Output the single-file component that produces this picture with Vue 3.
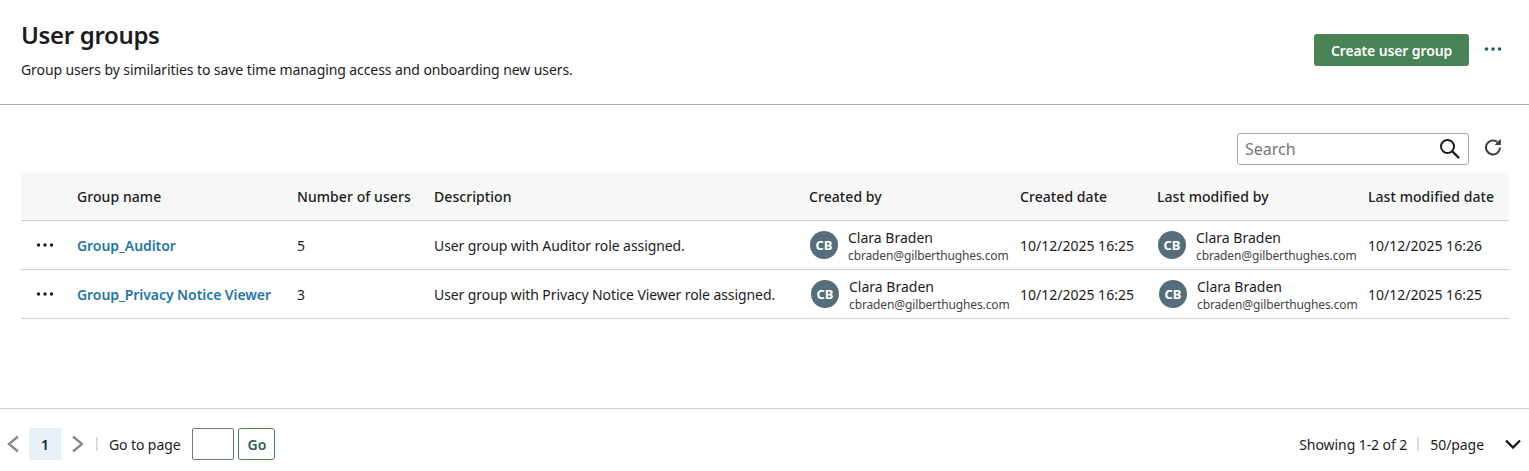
<template>
  <div class="page">
    <header class="top">
      <div>
        <h1>User groups</h1>
        <p>Group users by similarities to save time managing access and onboarding new users.</p>
      </div>
      <div class="top-actions">
        <button class="create" type="button">Create user group</button>
        <svg class="more-teal" width="18" height="6" viewBox="0 0 18 6">
          <circle cx="2.500" cy="3" r="1.800" />
          <circle cx="9" cy="3" r="1.800" />
          <circle cx="15.500" cy="3" r="1.800" />
        </svg>
      </div>
    </header>

    <div class="toolbar">
      <div class="search">
        <span>Search</span>
        <svg width="22" height="22" viewBox="0 0 22 22" fill="none" stroke="#1a1a1a" stroke-width="2">
          <circle cx="8.500" cy="8.500" r="6.500" />
          <path d="M13.300 13.300 20 20" stroke-width="2.400" />
        </svg>
      </div>
      <svg class="refresh" width="18" height="18" viewBox="0 0 18 18" fill="none" stroke="#3c3c3c" stroke-width="2">
        <path d="M16 9.500A7 7 0 1 1 13.300 3.900" />
        <path d="M16.800 0.800V7H10.600Z" fill="#3c3c3c" stroke="none" />
      </svg>
    </div>

    <div class="table">
      <div class="row head">
        <div></div>
        <div v-for="h in headers" :key="h">{{ h }}</div>
      </div>
      <div class="row" v-for="(g, i) in groups" :key="g.name">
        <svg class="more" width="18" height="4" viewBox="0 0 18 4">
          <circle cx="2.500" cy="2" r="1.700" />
          <circle cx="9" cy="2" r="1.700" />
          <circle cx="15.500" cy="2" r="1.700" />
        </svg>
        <a class="link">{{ g.name }}</a>
        <div>{{ g.users }}</div>
        <div class="desc">{{ g.description }}</div>
        <div class="person" :class="{ shifted: i === 1 }">
          <span class="avatar">CB</span>
          <div class="person-text">
            <div class="person-name">Clara Braden</div>
            <div class="person-mail">cbraden@gilberthughes.com</div>
          </div>
        </div>
        <div>{{ g.created }}</div>
        <div class="person" :class="{ shifted: i === 1 }">
          <span class="avatar">CB</span>
          <div class="person-text">
            <div class="person-name">Clara Braden</div>
            <div class="person-mail">cbraden@gilberthughes.com</div>
          </div>
        </div>
        <div>{{ g.modified }}</div>
      </div>
    </div>

    <footer class="pager">
      <div class="pager-left">
        <svg width="14" height="18" viewBox="0 0 14 18" fill="none" stroke="#8a8a8a" stroke-width="2.400">
          <path d="M11 1.500 2 9l9 7.500" />
        </svg>
        <span class="current">1</span>
        <svg width="14" height="18" viewBox="0 0 14 18" fill="none" stroke="#8a8a8a" stroke-width="2.400">
          <path d="M4 1.500 13 9l-9 7.500" />
        </svg>
        <span class="bar"></span>
        <span class="goto">Go to page</span>
        <span class="page-input"></span>
        <button class="go" type="button">Go</button>
      </div>
      <div class="pager-right">
        <span>Showing 1-2 of 2</span>
        <span class="bar"></span>
        <span>50/page</span>
        <svg class="chev" width="16" height="10" viewBox="0 0 16 10" fill="none" stroke="#1a1a1a" stroke-width="2.400">
          <path d="M1 1.500 8 8.500l7-7" />
        </svg>
      </div>
    </footer>
  </div>
</template>

<script setup>
const headers = [
  "Group name",
  "Number of users",
  "Description",
  "Created by",
  "Created date",
  "Last modified by",
  "Last modified date",
];

const groups = [
  {
    name: "Group_Auditor",
    users: 5,
    description: "User group with Auditor role assigned.",
    created: "10/12/2025 16:25",
    modified: "10/12/2025 16:26",
  },
  {
    name: "Group_Privacy Notice Viewer",
    users: 3,
    description: "User group with Privacy Notice Viewer role assigned.",
    created: "10/12/2025 16:25",
    modified: "10/12/2025 16:25",
  },
];
</script>

<style>
body {
  background: #fff;
}
</style>

<style scoped>
.page {
  height: 471px;
  overflow: hidden;
  font-family: "Noto Sans", "Open Sans", sans-serif;
  font-size: 14px;
  color: #1c1c1c;
}

.top {
  height: 105px;
  box-sizing: border-box;
  border-bottom: 1px solid #a9a9a9;
  padding: 19px 27px 0 21px;
  display: flex;
  justify-content: space-between;
}

h1 {
  margin: 0;
  font-size: 24px;
  line-height: 31px;
  font-weight: 600;
  letter-spacing: -0.35px;
}

.top p {
  margin: 9px 0 0;
  line-height: 21px;
  letter-spacing: -0.085px;
}

.top-actions {
  display: flex;
  align-items: flex-start;
  gap: 15px;
  padding-top: 15px;
}

.create {
  width: 155px;
  height: 32px;
  border: none;
  border-radius: 3px;
  background: #488255;
  color: #fff;
  font: 600 14px "Noto Sans", sans-serif;
  letter-spacing: -0.12px;
  padding: 0;
}

.more-teal {
  margin-top: 12px;
  fill: #1f5c6b;
}

.toolbar {
  display: flex;
  justify-content: flex-end;
  align-items: center;
  gap: 15px;
  padding: 28px 27px 8px 0;
}

.search {
  width: 232px;
  height: 32px;
  box-sizing: border-box;
  border: 1px solid #a8a8a8;
  border-radius: 3px;
  display: flex;
  align-items: center;
  justify-content: space-between;
  padding: 0 7px;
  font-size: 16px;
  color: #757575;
}

.refresh {
  margin-top: -4px;
}

.table {
  margin: 0 20px 0 21px;
}

.row {
  display: grid;
  grid-template-columns: 56px 220px 137px 375px 211px 137px 211px 141px;
  align-items: center;
  height: 48px;
  border-bottom: 1px solid #cfcfcf;
}

.head {
  height: 47px;
  background: #f7f7f7;
  font-weight: 500;
  white-space: nowrap;
  letter-spacing: 0.07px;
}

.more {
  margin-left: 15px;
  fill: #1c1c1c;
}

.link {
  color: #1f76ad;
  font-weight: 600;
  letter-spacing: -0.07px;
}

.desc {
  letter-spacing: -0.085px;
}

.person {
  display: flex;
  align-items: center;
  gap: 10px;
  margin-left: 1px;
  white-space: nowrap;
}

.person.shifted {
  margin-left: 2px;
}

.avatar {
  width: 28px;
  height: 28px;
  border-radius: 50%;
  background: #566d7b;
  color: #fff;
  font-size: 13px;
  font-weight: 700;
  display: flex;
  align-items: center;
  justify-content: center;
  flex: none;
}

.person-text {
  padding-top: 2px;
}

.person-name {
  line-height: 19px;
}

.person-mail {
  font-size: 12px;
  line-height: 17px;
  color: #444;
  letter-spacing: -0.12px;
}

.pager {
  margin-top: 89px;
  height: 63px;
  box-sizing: border-box;
  border-top: 1px solid #cfcfcf;
  padding: 19px 8px 0 7px;
  display: flex;
  justify-content: space-between;
  align-items: flex-start;
}

.pager-left,
.pager-right {
  display: flex;
  align-items: center;
  height: 32px;
}

.current {
  width: 32px;
  height: 32px;
  margin: 0 8px;
  border-radius: 3px;
  background: #e8f0f7;
  font-weight: 600;
  display: flex;
  align-items: center;
  justify-content: center;
}

.bar {
  width: 2px;
  height: 14px;
  background: #e0dcda;
}

.pager-left .bar {
  margin: 0 11px 0 13px;
}

.pager-right .bar {
  margin: 0 11px 0 10px;
}

.pager-right {
  letter-spacing: -0.07px;
}

.goto {
  letter-spacing: -0.1px;
}

.page-input {
  width: 42px;
  height: 32px;
  box-sizing: border-box;
  border: 1px solid #767676;
  border-radius: 2px;
  margin-left: 12px;
}

.go {
  width: 37px;
  height: 32px;
  margin-left: 4px;
  box-sizing: border-box;
  border: 1px solid #488255;
  border-radius: 3px;
  background: #fff;
  color: #2f5f4a;
  font: 600 14px "Noto Sans", sans-serif;
  padding: 0;
}

.chev {
  margin-left: 21px;
}
</style>
